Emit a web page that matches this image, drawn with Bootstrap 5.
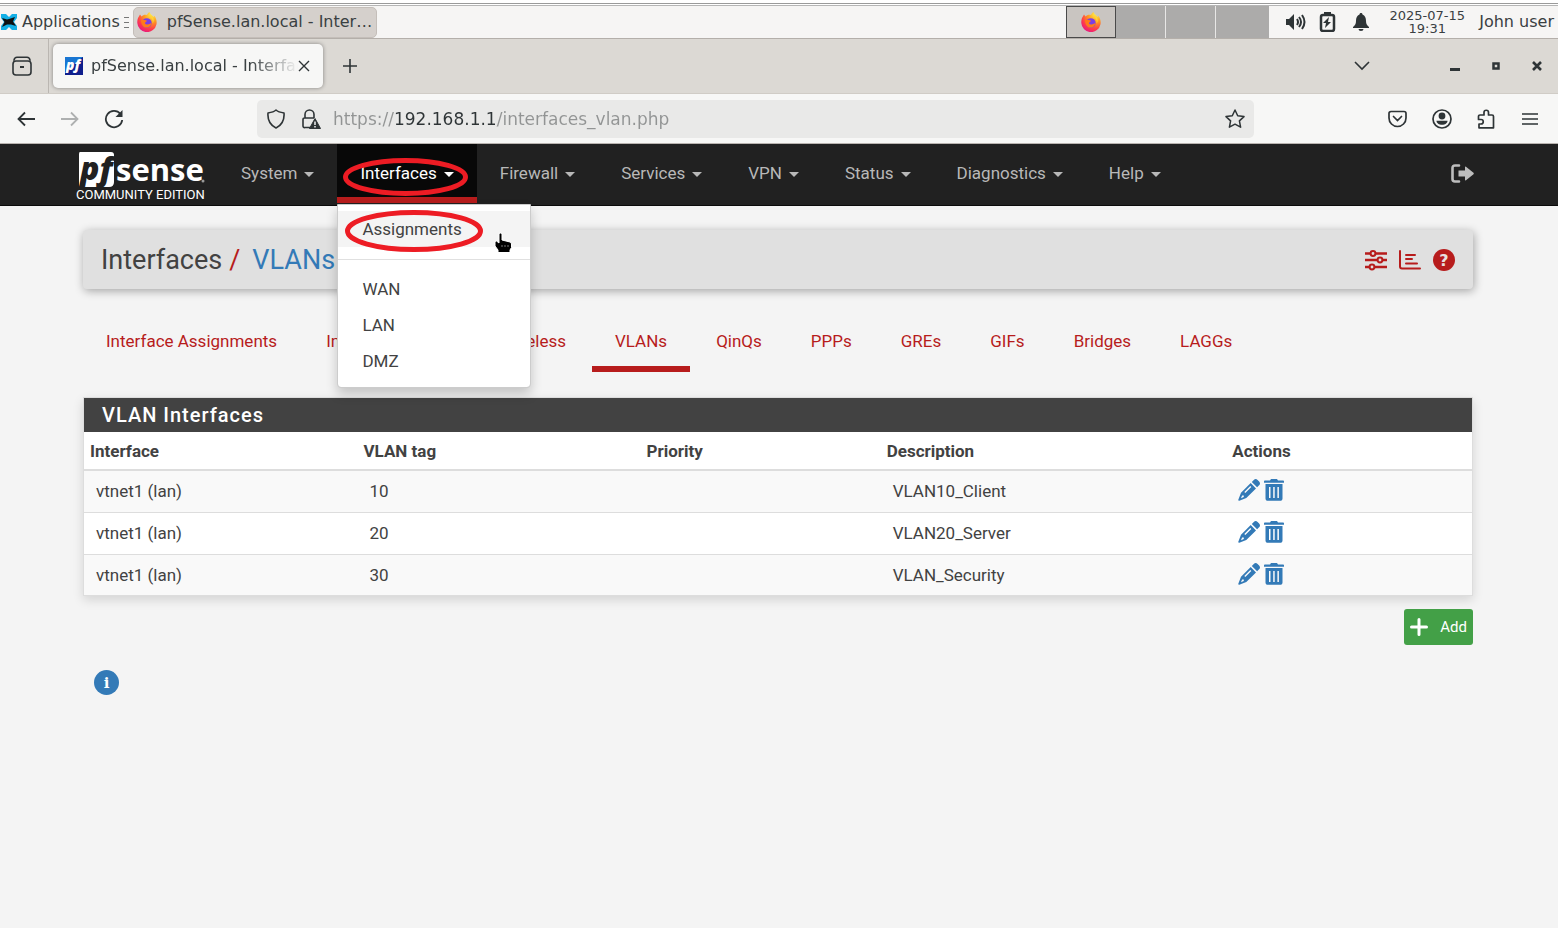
<!DOCTYPE html>
<html lang="en">
<head>
<meta charset="utf-8">
<meta name="viewport" content="width=device-width, initial-scale=1">
<title>pfSense.lan.local - Interfaces: VLANs</title>
<link href="https://cdn.jsdelivr.net/npm/bootstrap@5.3.0/dist/css/bootstrap.min.css" rel="stylesheet">
<style>
  :root { --pf-red: #b71c1c; --pf-blue: #337ab7; --ink: #2e3436; }
  body { font-family: Roboto, sans-serif; font-size: 17px; line-height: 24px; color: #424242; background: #f4f4f4; min-height: 100vh; }
  svg { display: block; flex: none; }
  button { color: inherit; }
  .desk, .tabstrip, .toolbar { font-family: "DejaVu Sans", sans-serif; color: #3a4042; }
  .plain { border: 0; background: none; padding: 0; }

  /* desktop panel */
  .desk-edge { height: 6px; background: #fff; border-top: 3px solid #fff; box-shadow: inset 0 1px #9a9a9a, inset 0 -1px #b5b5b5; }
  .desk { height: 33px; background: #f6f5f4; border-bottom: 1px solid #b4afaa; font-size: 16px; line-height: 18px; }
  .desk-icons { gap: 10px; }
  .task { width: 244px; height: 31px; background: #d5d0cc; border: 1px solid #c4beb9; border-radius: 5px; padding: 0 3px; gap: 10px; white-space: nowrap; }
  .grip { width: 5px; height: 11px; background: repeating-linear-gradient(#777 0 1px, transparent 1px 5px); }
  .space { width: 50px; height: 32px; background: #acabaa; border-right: 1px solid #e8e7e6; }
  .space.current { background: #c9c5c1; border: 1px solid #4a4a4a; }
  .space:last-child { width: 53px; border: 0; }
  .clock { font-size: 13px; line-height: 13px; width: 80px; }

  /* browser */
  .tabstrip { height: 55px; background: #dcd9d4; border-bottom: 1px solid #d0ccc6; font-size: 16px; }
  .firefox-view { width: 49px; border-right: 1px solid #bbb7b2; }
  .btab { width: 270px; height: 44px; background: #f7f7f6; border-radius: 5px; box-shadow: 0 0 4px #0006; padding: 0 11px 0 12px; }
  .btab-title { width: 207px; overflow: hidden; white-space: nowrap; mask-image: linear-gradient(90deg, #000 160px, transparent 207px); -webkit-mask-image: linear-gradient(90deg, #000 160px, transparent 207px); }
  .win-gap { margin-right: 80px; }
  .win-buttons { gap: 32px; }
  .toolbar { height: 50px; background: #f7f7f6; border-bottom: 1px solid #b9b4b0; padding: 0 20px 0 16px; }
  .tools { gap: 25px; }
  .urlbar { margin: 0 134px 0 133px; height: 38px; background: #e9e9e8; border-radius: 5px; padding: 0 9px; }
  .url { font-size: 17px; background: linear-gradient(90deg, #929494 61px, #2e3436 61px 164px, #929494 164px); background-clip: text; -webkit-background-clip: text; -webkit-text-fill-color: transparent; outline: 0; margin: 0 8px 0 11px; }

  /* site header */
  .pf-nav { height: 62px; background: #212121; border-bottom: 1px solid #0b0b0b; }
  .pf-wrap { max-width: 1406px; margin: 0 auto; }
  .brand { width: 142px; }
  .edition { font-size: 13px; line-height: 14px; color: #fff; white-space: nowrap; }
  .pf-nav .nav-link { color: #b8b8b8; font-size: 17px; line-height: 24px; padding: 17px 23px 12px; border-bottom: 6px solid transparent; }
  .pf-nav .nav-link.show { color: #fff; background: #080808; border-color: var(--pf-red); }
  .dropdown-toggle::after { margin-left: 7px; border-top-width: 5px; border-left-width: 5px; border-right-width: 5px; vertical-align: 2px; }
  .pf-menu { --bs-dropdown-padding-y: 6px; top: 60px; left: 0; width: 194px; border-color: #ccc; border-radius: 0 0 4px 4px; box-shadow: 0 6px 12px #0003; padding-bottom: 8px; font-size: 17px; }
  .pf-menu .dropdown-item { color: #424242; line-height: 24px; padding: 6px 24px; }
  .pf-menu .dropdown-item.hovered { background: #f4f4f4; }
  .pf-menu .dropdown-divider { margin: 12px 0 11px; border-color: #e0e0e0; opacity: 1; }
  .ring { position: absolute; pointer-events: none; overflow: visible; }
  .ring ellipse { fill: none; stroke: #ed1c24; stroke-width: 5; }
  .ring-toggle { left: 6px; top: 14px; }
  .ring-item { left: 7px; top: 5px; }
  .pointer { position: absolute; left: 156px; top: 27px; }

  /* page body */
  .pf-main { max-width: 1392px; margin: 0 auto; padding-right: 2px; }
  .crumbs { margin-top: 24px; height: 59px; background: #e0e0e0; border-radius: 4px; box-shadow: 1px 2px 10px #0005; padding: 0 18px; font-size: 27px; }
  .crumbs a, .actions a { color: var(--pf-blue); text-decoration: none; }
  .crumbs .icons a, .crumbs .slash { color: var(--pf-red); }
  .crumbs .slash { margin-left: 7px; }
  .crumbs .here { margin-left: 12px; }
  .pf-tabs { margin-top: 34px; gap: 3px; }
  .pf-tabs .nav-link { color: var(--pf-red); font-size: 17px; line-height: 24px; padding: 6px 23px 13px; border-bottom: 6px solid transparent; }
  .pf-tabs .nav-link.active { border-color: var(--pf-red); }
  .vpanel { margin-top: 25px; background: #fff; border: 1px solid #ddd; box-shadow: 0 4px 10px #0002; }
  .vpanel h2 { margin: 0; background: #424242; color: #fff; font-size: 20px; font-weight: 500; line-height: 34px; letter-spacing: 1px; padding: 0 18px; }
  .vtable { --bs-table-bg: transparent; --bs-table-striped-bg: #f9f9f9; --bs-table-color: #424242; --bs-table-striped-color: #424242; table-layout: fixed; margin: 0; border-color: #ddd; }
  .vtable th { padding: 7px 6px 6px; font-weight: 700; border-bottom: 2px solid #ddd; }
  .vtable td { padding: 8px 12px; line-height: 25px; font-size: 17px; }
  .vtable tbody tr:last-child td { border-bottom: 0; padding-bottom: 7px; }
  .c1 { width: 19.7%; } .c2 { width: 20.4%; } .c3 { width: 17.3%; } .c4 { width: 24.9%; }
  .actions { gap: 4px; }
  .add { background: #43a047; color: #fff; font-size: 15px; border: 0; border-radius: 3px; height: 36px; padding: 0 6px; gap: 12px; margin-top: 13px; }
  .info { margin: 25px 0 0 11px; }
</style>
</head>
<body>
<svg width="0" height="0" class="position-absolute" aria-hidden="true">
  <defs>
    <radialGradient id="fxg" cx=".75" cy=".1" r="1"><stop offset="0" stop-color="#fff44f"/><stop offset=".4" stop-color="#ff9a1f"/><stop offset=".75" stop-color="#ff3b4a"/><stop offset="1" stop-color="#e31587"/></radialGradient>
    <symbol id="fox" viewBox="0 0 20 20">
      <path d="M1 6 3 2.500l1.500 2C6 3 8 2.500 10 3c.5-1.500 1.500-2.500 2.500-3 .3 2 2.500 2.800 4 5l.8-1.200c2 2.500 2.700 5.500 2.200 8.500A9.700 9.700 0 0 1 .3 11C.2 9 .4 7.500 1 6z" fill="url(#fxg)"/>
      <circle cx="9.800" cy="11" r="4.800" fill="#7b3fe4"/>
      <path d="M4 8c2-.8 3.500.2 5 .3 1 .2 1.200 1-.2 1.600-1.500.6-1 2.600 1.400 2.700 2 .1 3-1.600 4.200-1.200-.8 3-3 4.400-5.400 4.200C6 15.400 4 12 4 8z" fill="#ff7a1a"/>
      <path d="M11 3.500c3 1 5.500 4 4.500 8 2-2 1.500-6-1.500-8z" fill="#ffd43a"/>
    </symbol>
    <symbol id="pencil" viewBox="0 0 22 22"><path d="M15.800 1c1.200-1.200 2.600-1.200 3.800 0l1.500 1.500c1.200 1.200 1.200 2.600 0 3.800l-2 2-5.300-5.300zM12.700 4.100 18 9.400 8.300 19 1.300 21.700c-.7.200-1.200-.3-1-1L3 13.800zM4.100 16.400 3 19.200l2.800-1.100v-1.700zM7.300 14l6-6-1-1-6 6z" fill="currentColor" fill-rule="evenodd"/></symbol>
    <symbol id="trash" viewBox="0 0 20 22"><path d="M7 0h6l1 1.500h5c.5 0 1 .4 1 .9v1.300H0V2.400c0-.5.500-.9 1-.9h5zM1.500 5h17v14.500c0 1.400-1 2.300-2.300 2.300H3.800c-1.300 0-2.300-.9-2.300-2.300zM5 8v11h1.500V8zm4.200 0v11h1.500V8zm4.200 0v11h1.500V8z" fill="currentColor" fill-rule="evenodd"/></symbol>
  </defs>
</svg>

<div class="desk-edge"></div>
<header class="desk d-flex align-items-center">
  <button class="plain d-flex align-items-center gap-1" type="button">
    <svg width="18" height="18" viewBox="0 0 18 18"><path d="M1 1h5l3 3 3-3h5v4l-3 4 3 4v4h-5l-3-3-3 3H1v-4l3-4-3-4z" fill="#14b0e6"/><path d="m2 5 5 1.500L9 6l6-2-2 4.500 3 4.500-5-1.500H7L2 14l2.500-5z" fill="#111"/></svg>
    <span>Applications</span>
  </button>
  <span class="grip ms-1 me-1"></span>
  <button class="task d-flex align-items-center" type="button">
    <svg width="20" height="20"><use href="#fox"/></svg><span>pfSense.lan.local - Inter…</span>
  </button>
  <div class="d-flex ms-auto">
    <button class="plain space current d-flex align-items-center justify-content-center" type="button" aria-label="Workspace 1"><svg width="20" height="20"><use href="#fox"/></svg></button>
    <button class="plain space" type="button" aria-label="Workspace 2"></button>
    <button class="plain space" type="button" aria-label="Workspace 3"></button>
    <button class="plain space" type="button" aria-label="Workspace 4"></button>
  </div>
  <div class="desk-icons d-flex align-items-center ms-3">
    <svg width="22" height="20" viewBox="0 0 22 20"><path d="M1 7h3l5-5v16l-5-5H1z" fill="#2e3436"/><path d="M12 7q2 3 0 6M14 5q4 5 0 10M17 3q5 7 0 14" fill="none" stroke="#2e3436" stroke-width="2"/></svg>
    <svg width="20" height="20" viewBox="0 0 20 20"><rect x="4" y="3" width="13" height="16" rx="2" fill="none" stroke="#2e3436" stroke-width="2.500"/><path d="M7 0h7v3H7zM12 5l-6 6h3l-1 5 6-6h-3z" fill="#2e3436"/></svg>
    <svg class="ms-1" width="20" height="20" viewBox="0 0 20 20"><path d="M10 1c1 0 1.500.6 1.500 1.500C14 3.500 15 6 15 9c0 3 1 4.500 3 6v1H2v-1c2-1.500 3-3 3-6 0-3 1-5.500 3.500-6.500C8.500 1.600 9 1 10 1zM7.500 17h5a2.500 2 0 0 1-5 0z" fill="#2e3436"/></svg>
  </div>
  <time class="clock text-center ms-3">2025-07-15<br>19:31</time>
  <span class="ms-2 me-1 ps-1">John user</span>
</header>

<div class="tabstrip d-flex align-items-center">
  <button class="plain firefox-view h-100 d-flex align-items-center ps-2" type="button" aria-label="Firefox View">
    <svg class="ms-1" width="20" height="20" viewBox="0 0 20 20" fill="none" stroke="#2e3436" stroke-width="1.600"><path d="M5 1.200h10q2.500 0 3 3M5 1.200q-2.500 0-3 3" stroke-linecap="round"/><rect x="1" y="5" width="18" height="14" rx="3"/><path d="M8 11h4" stroke-width="2"/></svg>
  </button>
  <div class="btab d-flex align-items-center ms-1">
    <svg width="18" height="18" viewBox="0 0 18 18"><path d="M0 0h18v18H0z" fill="#0f1e8c"/><path d="M0 0h18L0 14z" fill="#1976d2"/><text x="1" y="13" font-family="Open Sans, sans-serif" font-size="14" font-weight="800" font-style="italic" fill="#fff">pf</text></svg>
    <span class="btab-title ms-2">pfSense.lan.local - Interfaces</span>
    <button class="plain" type="button" aria-label="Close tab"><svg width="12" height="12" viewBox="0 0 12 12" stroke="#2e3436" stroke-width="1.400"><path d="m1 1 10 10M11 1 1 11"/></svg></button>
  </div>
  <button class="plain ms-3" type="button" aria-label="New tab"><svg class="ms-1" width="14" height="14" viewBox="0 0 14 14" stroke="#2e3436" stroke-width="1.600"><path d="M7 0v14M0 7h14"/></svg></button>
  <button class="plain ms-auto win-gap" type="button" aria-label="List tabs"><svg width="16" height="10" viewBox="0 0 16 10" fill="none" stroke="#2e3436" stroke-width="1.600"><path d="m1 1 7 7 7-7"/></svg></button>
  <div class="d-flex align-items-center win-buttons me-3">
    <button class="plain" type="button" aria-label="Minimize"><svg width="10" height="10" viewBox="0 0 10 10"><path d="M0 7h10v3H0z" fill="#2e3436"/></svg></button>
    <button class="plain" type="button" aria-label="Maximize"><svg width="8" height="8" viewBox="0 0 8 8"><path d="M1.500 1.500h5v5h-5z" fill="none" stroke="#2e3436" stroke-width="2.500"/></svg></button>
    <button class="plain" type="button" aria-label="Close"><svg width="10" height="10" viewBox="0 0 10 10" stroke="#2e3436" stroke-width="2.600"><path d="m1 1 8 8M9 1 1 9"/></svg></button>
  </div>
</div>

<div class="toolbar d-flex align-items-center">
  <div class="d-flex align-items-center gap-4">
    <button class="plain" type="button" aria-label="Back"><svg width="20" height="16" viewBox="0 0 20 16" fill="none" stroke="#2e3436" stroke-width="1.800"><path d="M19 8H3M9 1.500 2.500 8 9 14.500"/></svg></button>
    <button class="plain" type="button" aria-label="Forward" disabled><svg width="20" height="16" viewBox="0 0 20 16" fill="none" stroke="#aeb0b0" stroke-width="1.800"><path d="M1 8h16M11 1.500 17.500 8 11 14.500"/></svg></button>
    <button class="plain" type="button" aria-label="Reload"><svg width="20" height="20" viewBox="0 0 20 20"><path d="M16.500 5A8.200 8.200 0 1 0 18.200 11" fill="none" stroke="#2e3436" stroke-width="1.800"/><path d="M18.500 1v7h-7z" fill="#2e3436"/></svg></button>
  </div>
  <div class="urlbar flex-grow-1 d-flex align-items-center">
    <svg width="20" height="20" viewBox="0 0 20 20" fill="none" stroke="#2e3436" stroke-width="1.600"><path d="M10 1c2 1.800 5 2.500 8 3 .5 6-2 12-8 15C4 16 1.500 10 2 4c3-.5 6-1.200 8-3z" stroke-linejoin="round"/></svg>
    <svg class="ms-3" width="20" height="20" viewBox="0 0 20 20"><path d="M8 18.500H3A1.500 1.500 0 0 1 1 17v-6.500A1.500 1.500 0 0 1 2.500 9H12M3 9V5.500a4.500 4.500 0 0 1 9 0V9" fill="none" stroke="#2e3436" stroke-width="1.600"/><path d="m13 9.500 5.500 10h-11z" fill="#2e3436" stroke="#2e3436"/><path d="M13 12.500v3.500m0 1v1.500" stroke="#fff" stroke-width="1.400"/></svg>
    <input class="plain url flex-grow-1" type="text" aria-label="Address" value="https://192.168.1.1/interfaces_vlan.php">
    <button class="plain" type="button" aria-label="Bookmark"><svg width="20" height="20" viewBox="0 0 20 20" fill="none" stroke="#2e3436" stroke-width="1.500" stroke-linejoin="round"><path d="m10 1 2.700 5.700 6.300.9-4.600 4.300 1.200 6.300L10 15.200l-5.600 3 1.200-6.300L1 7.600l6.300-.9z"/></svg></button>
  </div>
  <div class="tools d-flex align-items-center">
    <button class="plain" type="button" aria-label="Pocket"><svg width="19" height="18" viewBox="0 0 19 18" fill="none" stroke="#2e3436" stroke-width="1.700"><path d="M3 1.500h13a2 2 0 0 1 2 2V8a8.500 8.500 0 0 1-17 0V3.500a2 2 0 0 1 2-2z"/><path d="m5.500 6.500 4 4 4-4" stroke-linecap="round"/></svg></button>
    <button class="plain" type="button" aria-label="Account"><svg width="20" height="20" viewBox="0 0 20 20"><circle cx="10" cy="10" r="9" fill="none" stroke="#2e3436" stroke-width="1.700"/><circle cx="10" cy="7" r="3.400" fill="#2e3436"/><path d="M4.500 11.800h11c0 2.500-2.500 4-5.500 4s-5.500-1.500-5.500-4z" fill="#2e3436"/></svg></button>
    <button class="plain" type="button" aria-label="Extensions"><svg width="20" height="20" viewBox="0 0 20 20" fill="none" stroke="#2e3436" stroke-width="1.700" stroke-linejoin="round"><path d="M2 18.800V15h2a2 2 0 0 0 0-4.500H1.500V7.500A1.500 1.500 0 0 1 3 6h4V3.500a2 2 0 0 1 4.500 0V6H15a1.500 1.500 0 0 1 1.500 1.500v11.300z"/></svg></button>
    <button class="plain" type="button" aria-label="Menu"><svg width="16" height="14" viewBox="0 0 16 14" stroke="#2e3436" stroke-width="1.500"><path d="M0 2h16M0 7h16M0 12h16"/></svg></button>
  </div>
</div>

<nav class="pf-nav">
  <div class="pf-wrap d-flex">
    <a class="brand text-decoration-none pt-2" href="#" aria-label="pfSense Community Edition">
      <svg width="130" height="36" viewBox="0 0 130 36"><path d="M4 0h31q3 0 3 3v27q0 5-5 5H5q-2 0-2-2V2q0-2 1-2z" fill="#fff"/><text x="4" y="28" font-family="Open Sans, sans-serif" font-size="32" font-weight="800" font-style="italic" fill="#212121">pf</text><text x="40" y="29" font-family="Open Sans, sans-serif" font-size="31" font-weight="700" fill="#fff">sense</text><circle cx="127" cy="29" r="1.500" fill="#999"/></svg>
      <span class="edition d-block">COMMUNITY EDITION</span>
    </a>
    <ul class="nav flex-nowrap">
      <li class="nav-item"><a class="nav-link dropdown-toggle" href="#">System</a></li>
      <li class="nav-item dropdown">
        <a class="nav-link dropdown-toggle show" href="#" aria-expanded="true">Interfaces</a>
        <svg class="ring ring-toggle" width="125" height="38" viewBox="0 0 125 38"><ellipse cx="62.500" cy="19" rx="60" ry="16.500"/></svg>
        <ul class="dropdown-menu pf-menu show">
          <li><a class="dropdown-item hovered" href="#">Assignments</a></li>
          <li><hr class="dropdown-divider"></li>
          <li><a class="dropdown-item" href="#">WAN</a></li>
          <li><a class="dropdown-item" href="#">LAN</a></li>
          <li><a class="dropdown-item" href="#">DMZ</a></li>
          <li aria-hidden="true">
            <svg class="ring ring-item" width="138" height="42" viewBox="0 0 138 42"><ellipse cx="69" cy="21" rx="66.500" ry="18.500"/></svg>
            <svg class="pointer" width="19" height="22" viewBox="0 0 19 22"><path d="M5 1.500q1.500-1 3 0V8l8 2q1.500.5 1.500 2v3.500L16 18v2.500H4V18L1 14V9.500l1.500-.5L5 11z" fill="#000" stroke="#fff"/><path d="M8 13v2m3-2v2m3-2v2" stroke="#777"/></svg>
          </li>
        </ul>
      </li>
      <li class="nav-item"><a class="nav-link dropdown-toggle" href="#">Firewall</a></li>
      <li class="nav-item"><a class="nav-link dropdown-toggle" href="#">Services</a></li>
      <li class="nav-item"><a class="nav-link dropdown-toggle" href="#">VPN</a></li>
      <li class="nav-item"><a class="nav-link dropdown-toggle" href="#">Status</a></li>
      <li class="nav-item"><a class="nav-link dropdown-toggle" href="#">Diagnostics</a></li>
      <li class="nav-item"><a class="nav-link dropdown-toggle" href="#">Help</a></li>
    </ul>
    <a class="ms-auto me-2 pt-3" href="#" aria-label="Log out"><svg class="mt-1" width="23" height="19" viewBox="0 0 23 19"><path d="M8 1.500H4Q1.500 1.500 1.500 4v11q0 2.500 2.500 2.500h4" fill="none" stroke="#bdbdbd" stroke-width="2.600" stroke-linecap="round"/><path d="M7.500 6.500H14V3.300q0-1.300 1-.5l7.500 6q.6.700 0 1.400l-7.500 6q-1 .8-1-.5V12.500H7.500z" fill="#bdbdbd"/></svg></a>
  </div>
</nav>

<main class="pf-main">
  <div class="crumbs d-flex align-items-center">
    <span>Interfaces</span><span class="slash">/</span><a class="here" href="#">VLANs</a>
    <div class="icons d-flex align-items-center ms-auto">
      <a href="#" aria-label="Settings"><svg width="22" height="22" viewBox="0 0 22 22" fill="none" stroke="currentColor" stroke-width="2.400"><path d="M0 4.500h5m6 0h11M0 11h12m6 0h4M0 18h4m6 0h12"/><circle cx="8" cy="4.500" r="2.400" stroke-width="2"/><circle cx="15" cy="11" r="2.400" stroke-width="2"/><circle cx="7" cy="18" r="2.400" stroke-width="2"/></svg></a>
      <a class="mx-2 px-1" href="#" aria-label="Status"><svg width="22" height="22" viewBox="0 0 22 22" fill="none" stroke="currentColor" stroke-width="2" stroke-linecap="round"><path d="M1 2v15.500q0 2 2 2h18M7 6h9M7 10h6M7 14.500h11"/></svg></a>
      <a href="#" aria-label="Help"><svg width="22" height="22" viewBox="0 0 22 22"><circle cx="11" cy="11" r="11" fill="currentColor"/><text x="11" y="17" text-anchor="middle" font-family="DejaVu Sans, sans-serif" font-size="16" font-weight="700" fill="#e8e0e0">?</text></svg></a>
    </div>
  </div>

  <ul class="nav pf-tabs">
    <li class="nav-item"><a class="nav-link" href="#">Interface Assignments</a></li>
    <li class="nav-item"><a class="nav-link" href="#">Interface Groups</a></li>
    <li class="nav-item"><a class="nav-link" href="#">Wireless</a></li>
    <li class="nav-item"><a class="nav-link active" href="#" aria-current="page">VLANs</a></li>
    <li class="nav-item"><a class="nav-link" href="#">QinQs</a></li>
    <li class="nav-item"><a class="nav-link" href="#">PPPs</a></li>
    <li class="nav-item"><a class="nav-link" href="#">GREs</a></li>
    <li class="nav-item"><a class="nav-link" href="#">GIFs</a></li>
    <li class="nav-item"><a class="nav-link" href="#">Bridges</a></li>
    <li class="nav-item"><a class="nav-link" href="#">LAGGs</a></li>
  </ul>

  <section class="vpanel">
    <h2>VLAN Interfaces</h2>
    <table class="table table-striped vtable">
      <colgroup><col class="c1"><col class="c2"><col class="c3"><col class="c4"><col></colgroup>
      <thead><tr><th>Interface</th><th>VLAN tag</th><th>Priority</th><th>Description</th><th>Actions</th></tr></thead>
      <tbody>
        <tr><td>vtnet1 (lan)</td><td>10</td><td></td><td>VLAN10_Client</td><td><div class="actions d-flex"><a href="#" aria-label="Edit"><svg width="22" height="22"><use href="#pencil"/></svg></a><a href="#" aria-label="Delete"><svg width="20" height="22"><use href="#trash"/></svg></a></div></td></tr>
        <tr><td>vtnet1 (lan)</td><td>20</td><td></td><td>VLAN20_Server</td><td><div class="actions d-flex"><a href="#" aria-label="Edit"><svg width="22" height="22"><use href="#pencil"/></svg></a><a href="#" aria-label="Delete"><svg width="20" height="22"><use href="#trash"/></svg></a></div></td></tr>
        <tr><td>vtnet1 (lan)</td><td>30</td><td></td><td>VLAN_Security</td><td><div class="actions d-flex"><a href="#" aria-label="Edit"><svg width="22" height="22"><use href="#pencil"/></svg></a><a href="#" aria-label="Delete"><svg width="20" height="22"><use href="#trash"/></svg></a></div></td></tr>
      </tbody>
    </table>
  </section>

  <button class="add d-flex align-items-center ms-auto" type="button"><svg width="18" height="18" viewBox="0 0 18 18" stroke="#fff" stroke-width="3" stroke-linecap="round"><path d="M9 1.500v15M1.500 9h15"/></svg>Add</button>
  <button class="plain info" type="button" aria-label="Show information"><svg width="25" height="25" viewBox="0 0 25 25"><circle cx="12.500" cy="12.500" r="12.500" fill="#337ab7"/><text x="12.500" y="18" text-anchor="middle" font-family="DejaVu Serif, serif" font-size="15" font-weight="700" fill="#fff">i</text></svg></button>
</main>
<script src="https://cdn.jsdelivr.net/npm/bootstrap@5.3.0/dist/js/bootstrap.bundle.min.js"></script>
</body>
</html>
